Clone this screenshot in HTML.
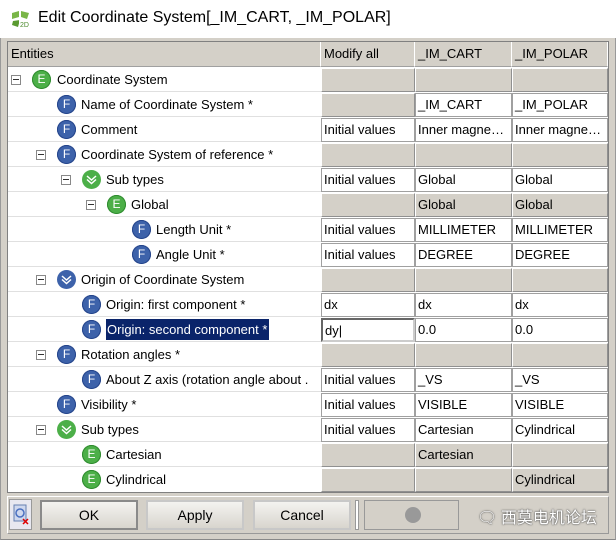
<!DOCTYPE html>
<html><head><meta charset="utf-8"><style>
*{margin:0;padding:0;box-sizing:border-box}
body{width:616px;height:540px;background:#fff;font-family:"Liberation Sans","Noto Sans CJK SC",sans-serif;font-size:13px;color:#000;position:relative;overflow:hidden}
.a{position:absolute}
#frame{left:0;top:38px;width:616px;height:502px;background:#d4d0c8;border-left:1px solid #999;border-right:1px solid #999;border-bottom:1px solid #888}
#tbl{left:7px;top:41px;width:602px;height:452px;background:#fff;border:1px solid #808080}
.hd{top:42px;height:25px;background:#d4d0c8;border-right:1px solid #fff;border-bottom:1px solid #a0a0a0;padding:5px 3px;line-height:14px}
.r{left:8px;width:600px;height:25px;border-bottom:1px solid #e0e0e0}
.c{position:absolute;top:1px;height:24px;line-height:22px;padding-left:2px;white-space:nowrap;overflow:hidden;border:1px solid #a0a0a0;background:#fff}
.g{background:#d4d0c8;border-color:#fff #909090 #909090 #fff}
.m{left:313px;width:94px}.p{left:407px;width:97px}.q{left:504px;width:96px}
.ic{position:absolute;top:3px;width:19px;height:19px;border-radius:50%;color:#fff;font-size:12px;line-height:19px;text-align:center}
.E{background:#4caf48;box-shadow:inset 0 0 0 1px #2e8a2e}.F{background:#3d62aa;box-shadow:inset 0 0 0 1px #24448a}
.V{background:#4caf48}.VB{background:#3d62aa}
.ic svg{position:absolute;left:4px;top:4px}
.t{position:absolute;top:0;line-height:25px;white-space:nowrap}
.x{position:absolute;top:8px;width:10px;height:10px;border:1px solid #888;background:#fff}
.x:after{content:"";position:absolute;left:1px;top:3px;width:6px;height:1px;background:#333}
.btn{top:500px;height:30px;background:linear-gradient(#f4f3f0,#d8d5ce);border:2px solid #8a8a8a;text-align:center;line-height:26px;font-size:14px}
</style></head><body>
<svg class="a" style="left:10px;top:9px" width="22" height="20" viewBox="0 0 22 20"><path d="M2 4 L9 2 L9 8 L2 10Z M11 2 L19 4 L17 10 L11 8Z" fill="#7ab648"/><path d="M3 12 L10 11 L8 18 L2 16Z" fill="#5a9a30"/><rect x="9" y="11" width="12" height="8" fill="#fff"/><text x="10" y="18" font-size="7" fill="#4a8a2a" font-family="Liberation Sans">2D</text></svg>
<div class="a" style="left:38px;top:9px;font-size:16px">Edit Coordinate System[_IM_CART, _IM_POLAR]</div>
<div class="a" id="frame"></div>
<div class="a" id="tbl"></div>
<div class="a hd" style="left:8px;width:313px">Entities</div>
<div class="a hd" style="left:321px;width:94px">Modify all</div>
<div class="a hd" style="left:415px;width:97px">_IM_CART</div>
<div class="a hd" style="left:512px;width:96px">_IM_POLAR</div>

<div class="a r" style="top:67px"><div class="x" style="left:3px"></div><div class="ic E" style="left:24px">E</div><div class="t" style="left:49px">Coordinate System</div><div class="c g m"></div><div class="c g p"></div><div class="c g q"></div></div>
<div class="a r" style="top:92px"><div class="ic F" style="left:49px">F</div><div class="t" style="left:73px">Name of Coordinate System *</div><div class="c g m"></div><div class="c p">_IM_CART</div><div class="c q">_IM_POLAR</div></div>
<div class="a r" style="top:117px"><div class="ic F" style="left:49px">F</div><div class="t" style="left:73px">Comment</div><div class="c m">Initial values</div><div class="c p">Inner magne…</div><div class="c q">Inner magne…</div></div>
<div class="a r" style="top:142px"><div class="x" style="left:28px"></div><div class="ic F" style="left:49px">F</div><div class="t" style="left:73px">Coordinate System of reference *</div><div class="c g m"></div><div class="c g p"></div><div class="c g q"></div></div>
<div class="a r" style="top:167px"><div class="x" style="left:53px"></div><div class="ic V" style="left:74px"><svg width="11" height="11"><path d="M1 2l4.5 4 4.5-4M1 5.5l4.5 4 4.5-4" stroke="#fff" stroke-width="1.5" fill="none"/></svg></div><div class="t" style="left:98px">Sub types</div><div class="c m">Initial values</div><div class="c p">Global</div><div class="c q">Global</div></div>
<div class="a r" style="top:192px"><div class="x" style="left:78px"></div><div class="ic E" style="left:99px">E</div><div class="t" style="left:123px">Global</div><div class="c g m"></div><div class="c g p">Global</div><div class="c g q">Global</div></div>
<div class="a r" style="top:217px"><div class="ic F" style="left:124px">F</div><div class="t" style="left:148px">Length Unit *</div><div class="c m">Initial values</div><div class="c p">MILLIMETER</div><div class="c q">MILLIMETER</div></div>
<div class="a r" style="top:242px"><div class="ic F" style="left:124px">F</div><div class="t" style="left:148px">Angle Unit *</div><div class="c m">Initial values</div><div class="c p">DEGREE</div><div class="c q">DEGREE</div></div>
<div class="a r" style="top:267px"><div class="x" style="left:28px"></div><div class="ic VB" style="left:49px"><svg width="11" height="11"><path d="M1 2l4.5 4 4.5-4M1 5.5l4.5 4 4.5-4" stroke="#fff" stroke-width="1.5" fill="none"/></svg></div><div class="t" style="left:73px">Origin of Coordinate System</div><div class="c g m"></div><div class="c g p"></div><div class="c g q"></div></div>
<div class="a r" style="top:292px"><div class="ic F" style="left:74px">F</div><div class="t" style="left:98px">Origin: first component *</div><div class="c m">dx</div><div class="c p">dx</div><div class="c q">dx</div></div>
<div class="a r" style="top:317px"><div class="ic F" style="left:74px">F</div><div class="t" style="left:98px;top:2px;line-height:21px;background:#0a246a;color:#fff;padding:0 2px 0 1px">Origin: second component *</div><div class="c m" style="border:2px solid #555;border-color:#666 #ccc #ccc #666">dy|</div><div class="c p">0.0</div><div class="c q">0.0</div></div>
<div class="a r" style="top:342px"><div class="x" style="left:28px"></div><div class="ic F" style="left:49px">F</div><div class="t" style="left:73px">Rotation angles *</div><div class="c g m"></div><div class="c g p"></div><div class="c g q"></div></div>
<div class="a r" style="top:367px"><div class="ic F" style="left:74px">F</div><div class="t" style="left:98px">About Z axis (rotation angle about .</div><div class="c m">Initial values</div><div class="c p">_VS</div><div class="c q">_VS</div></div>
<div class="a r" style="top:392px"><div class="ic F" style="left:49px">F</div><div class="t" style="left:73px">Visibility *</div><div class="c m">Initial values</div><div class="c p">VISIBLE</div><div class="c q">VISIBLE</div></div>
<div class="a r" style="top:417px"><div class="x" style="left:28px"></div><div class="ic V" style="left:49px"><svg width="11" height="11"><path d="M1 2l4.5 4 4.5-4M1 5.5l4.5 4 4.5-4" stroke="#fff" stroke-width="1.5" fill="none"/></svg></div><div class="t" style="left:73px">Sub types</div><div class="c m">Initial values</div><div class="c p">Cartesian</div><div class="c q">Cylindrical</div></div>
<div class="a r" style="top:442px"><div class="ic E" style="left:74px">E</div><div class="t" style="left:98px">Cartesian</div><div class="c g m"></div><div class="c g p">Cartesian</div><div class="c g q"></div></div>
<div class="a r" style="top:467px;border-bottom:none"><div class="ic E" style="left:74px">E</div><div class="t" style="left:98px">Cylindrical</div><div class="c g m"></div><div class="c g p"></div><div class="c g q">Cylindrical</div></div>

<div class="a" style="left:7px;top:496px;width:602px;height:38px;border:1px solid #a8a8a8;border-color:#fff #999 #999 #fff"></div>
<div class="a" style="left:9px;top:499px;width:23px;height:31px;border:1px solid #999;background:#e8e8f0"><svg width="21" height="29"><rect x="4" y="5" width="12" height="16" fill="#cfd8ee" stroke="#6680b0"/><circle cx="10" cy="13" r="4" fill="none" stroke="#4a70c0" stroke-width="1.5"/><path d="M13 19l5 5M18 19l-5 5" stroke="#d00" stroke-width="1.5"/></svg></div>
<div class="a btn" style="left:40px;width:98px">OK</div>
<div class="a btn" style="left:146px;width:98px;border-color:#c8c8c8">Apply</div>
<div class="a btn" style="left:253px;width:98px;border-color:#c8c8c8">Cancel</div>
<div class="a" style="left:355px;top:500px;width:4px;height:30px;border:1px solid #999;background:#fff"></div>
<div class="a" style="left:364px;top:500px;width:95px;height:30px;border:1px solid #999;background:#d4d0c8"><div class="a" style="left:40px;top:6px;width:16px;height:16px;border-radius:50%;background:#999"></div></div>
<div class="a" style="left:477px;top:504px;font-size:16px;color:#fff;text-shadow:0 0 2px #555,0 0 1px #333;font-family:'Noto Sans CJK SC',sans-serif">🗨 西莫电机论坛</div>
</body></html>
